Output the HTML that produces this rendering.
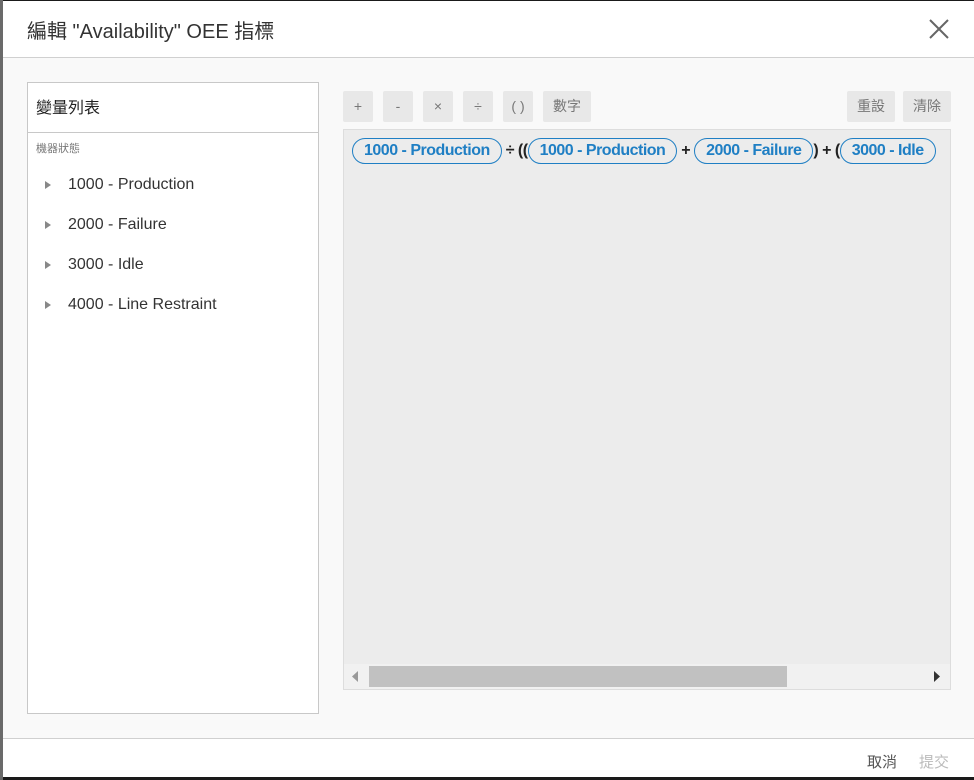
<!DOCTYPE html>
<html><head><meta charset="utf-8"><style>
*{box-sizing:border-box;margin:0;padding:0}
body{width:974px;height:780px;overflow:hidden;background:#1a1a1a;font-family:"Liberation Sans","Noto Sans CJK TC",sans-serif;position:relative}
.strip{position:absolute;left:0;top:0;width:3px;height:780px;background:#6a6a6a}
.dlg{position:absolute;left:3px;top:1px;width:971px;height:776px;background:#f9f9f9}
.hdr{position:absolute;left:0;top:0;width:971px;height:57px;background:#fff;border-bottom:1px solid #d0d0d0}
.hdr h1{position:absolute;left:24px;top:14px;font-size:20px;font-weight:normal;color:#333}
.close{position:absolute;left:926px;top:18px}
.left{position:absolute;left:24px;top:81px;width:292px;height:632px;background:#fff;border:1px solid #c8c8c8}
.left .t{height:50px;border-bottom:1px solid #c8c8c8;padding:11px 8px;font-size:16px;color:#222}
.left .g{font-size:11px;color:#777;padding:7px 8px 8px}
.item{height:40px;line-height:40px;font-size:16px;color:#333;padding-left:40px;position:relative;top:1px}
.item:before{content:"";position:absolute;left:17px;top:16px;border-left:6px solid #888;border-top:4px solid transparent;border-bottom:4px solid transparent}
.btn{position:absolute;top:90px;height:31px;background:#e8e8e8;border-radius:2px;color:#777;font-size:14px;text-align:center;line-height:31px}
.expr{position:absolute;left:340px;top:128px;width:608px;height:561px;background:#ececec;border:1px solid #ddd;overflow:hidden}
.row{position:absolute;left:8px;top:8px;white-space:nowrap;font-size:16px;font-weight:bold;color:#222;line-height:24px;letter-spacing:-0.5px}
.chip{display:inline-block;border:1px solid #1f7fc4;border-radius:13px;color:#1f7fc4;padding:0 11px;height:26px;line-height:24px}
.sb{position:absolute;left:0;bottom:0;width:606px;height:25px;background:#f1f1f1}
.thumb{position:absolute;left:25px;top:2px;width:418px;height:21px;background:#c1c1c1}
.ftr{position:absolute;left:0;top:737px;width:971px;height:39px;background:#fff;border-top:1px solid #d0d0d0}
.ftr span{position:absolute;top:12px;font-size:15px}
</style></head><body>
<div class="strip"></div>
<div class="dlg">
<div class="hdr"><h1>編輯 "Availability" OEE 指標</h1>
<svg class="close" width="20" height="20" viewBox="0 0 20 20"><path d="M1 1L19 19M19 1L1 19" stroke="#666" stroke-width="2"/></svg></div>
<div class="left"><div class="t">變量列表</div><div class="g">機器狀態</div>
<div class="item">1000 - Production</div><div class="item">2000 - Failure</div><div class="item">3000 - Idle</div><div class="item">4000 - Line Restraint</div></div>
<div class="btn" style="left:340px;width:30px">+</div>
<div class="btn" style="left:380px;width:30px">-</div>
<div class="btn" style="left:420px;width:30px">×</div>
<div class="btn" style="left:460px;width:30px">÷</div>
<div class="btn" style="left:500px;width:30px">( )</div>
<div class="btn" style="left:540px;width:48px">數字</div>
<div class="btn" style="left:844px;width:48px">重設</div>
<div class="btn" style="left:900px;width:48px">清除</div>
<div class="expr"><div class="row"><span class="chip">1000 - Production</span> ÷ ((<span class="chip">1000 - Production</span> + <span class="chip">2000 - Failure</span>) + (<span class="chip">3000 - Idle</span></div>
<div class="sb"><svg style="position:absolute;left:8px;top:7px" width="6" height="11"><path d="M6 0L0 5.5L6 11Z" fill="#999"/></svg><div class="thumb"></div><svg style="position:absolute;left:590px;top:7px" width="6" height="11"><path d="M0 0L6 5.5L0 11Z" fill="#333"/></svg></div></div>
<div class="ftr"><span style="left:864px;color:#555">取消</span><span style="left:916px;color:#bbb">提交</span></div>
</div>
</body></html>
